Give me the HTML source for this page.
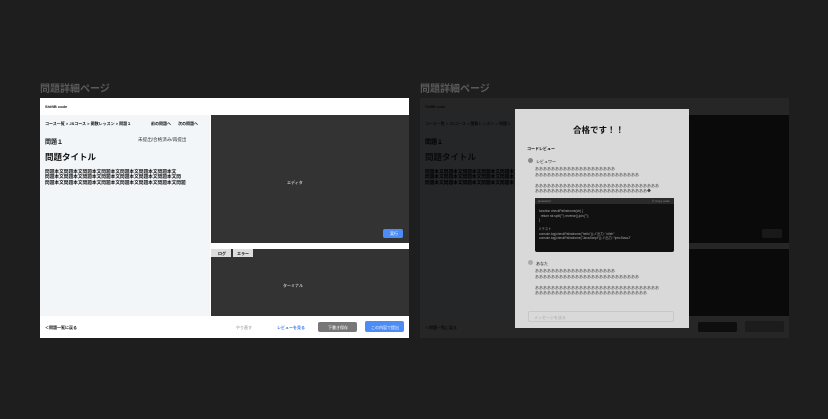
<!DOCTYPE html>
<html><head><meta charset="utf-8"><style>
*{margin:0;padding:0;box-sizing:border-box}
body{width:828px;height:419px;background:#1e1e1e;position:relative;overflow:hidden;font-family:"Liberation Sans","Noto Sans CJK JP",sans-serif;color:#111}
.a{position:absolute;white-space:nowrap}
.t{font-size:4px}
.b{font-weight:bold}
</style></head><body>
<div class="a" style="left:40px;top:80px;font-size:10px;color:#5a5a5a;font-weight:bold">問題詳細ページ</div>
<div class="a" style="left:420px;top:80px;font-size:10px;color:#5a5a5a;font-weight:bold">問題詳細ページ</div>

<!-- left frame -->
<div class="a" style="left:40px;top:98px;width:369px;height:240px;background:#fff"></div>
<div class="a t b" style="left:45px;top:104px">ShiftB code</div>
<div class="a" style="left:40px;top:115px;width:170px;height:201px;background:#f3f6f9"></div>
<div class="a t b" style="left:45px;top:121px">コース一覧 &gt; JSコース &gt; 関数レッスン &gt; 問題１</div>
<div class="a t b" style="left:151px;top:121px">前の問題へ</div>
<div class="a t b" style="left:178px;top:121px">次の問題へ</div>
<div class="a b" style="left:45px;top:137px;font-size:6px">問題１</div>
<div class="a" style="left:138px;top:137px;font-size:4.6px;color:#333">未提出/合格済み/再提出</div>
<div class="a b" style="left:45px;top:151px;font-size:8.5px">問題タイトル</div>
<div class="a b" style="left:45px;top:169px;font-size:4.7px;line-height:5.3px">問題本文問題本文問題本文問題本文問題本文問題本文問題本文<br>問題本文問題本文問題本文問題本文問題本文問題本文問題本文問<br>問題本文問題本文問題本文問題本文問題本文問題本文問題本文問題</div>
<div class="a" style="left:211px;top:115px;width:198px;height:128px;background:#333"></div>
<div class="a t" style="left:287px;top:180px;color:#fff">エディタ</div>
<div class="a" style="left:383px;top:229px;width:20px;height:9px;background:#4d8cf5;border-radius:2px"></div>
<div class="a t" style="left:390px;top:231px;color:#fff">実行</div>
<div class="a" style="left:211px;top:249px;width:198px;height:67px;background:#333"></div>
<div class="a" style="left:211px;top:249px;width:20px;height:8px;background:#ddd"></div>
<div class="a" style="left:233px;top:249px;width:20px;height:8px;background:#ddd"></div>
<div class="a t b" style="left:218px;top:251px">ログ</div>
<div class="a t b" style="left:237px;top:251px">エラー</div>
<div class="a t" style="left:283px;top:283px;color:#fff">ターミナル</div>
<div class="a t b" style="left:45px;top:325px">＜問題一覧に戻る</div>
<div class="a t" style="left:236px;top:325px;color:#888">やり直す</div>
<div class="a t b" style="left:277px;top:325px;color:#3b7be8">レビューを見る</div>
<div class="a" style="left:318px;top:322px;width:39px;height:10px;background:#777;border-radius:2px"></div>
<div class="a t" style="left:328px;top:325px;color:#fff">下書き保存</div>
<div class="a" style="left:365px;top:321px;width:39px;height:11px;background:#4d8cf5;border-radius:2px"></div>
<div class="a t" style="left:371px;top:325px;color:#fff">この内容で提出</div>

<!-- right frame dimmed -->
<div class="a" style="left:420px;top:98px;width:369px;height:240px;background:#262626"></div>
<div class="a" style="left:420px;top:115px;width:170px;height:201px;background:#252627"></div>
<div class="a t" style="left:425px;top:104px;color:#000">ShiftB code</div>
<div class="a t" style="left:425px;top:121px;color:#000">コース一覧 &gt; JSコース &gt; 関数レッスン &gt; 問題１</div>
<div class="a b" style="left:425px;top:137px;font-size:6px;color:#000">問題１</div>
<div class="a b" style="left:425px;top:151px;font-size:8.5px;color:#0a0a0a">問題タイトル</div>
<div class="a b" style="left:425px;top:169px;font-size:4.7px;line-height:5.3px;color:#000">問題本文問題本文問題本文問題本文問題本文<br>問題本文問題本文問題本文問題本文問題本文<br>問題本文問題本文問題本文問題本文問題本文</div>
<div class="a" style="left:591px;top:115px;width:198px;height:128px;background:#0a0a0a"></div>
<div class="a" style="left:762px;top:229px;width:20px;height:9px;background:#191919;border-radius:2px"></div>
<div class="a" style="left:591px;top:249px;width:198px;height:67px;background:#0a0a0a"></div>
<div class="a t" style="left:425px;top:325px;color:#000">＜問題一覧に戻る</div>
<div class="a" style="left:698px;top:322px;width:39px;height:10px;background:#0e0e0e;border-radius:2px"></div>
<div class="a" style="left:745px;top:321px;width:39px;height:11px;background:#1c1c1c;border-radius:2px"></div>

<!-- modal -->
<div class="a" style="left:515px;top:109px;width:174px;height:219px;background:#d9d9d9"></div>
<div class="a b" style="left:573px;top:124px;font-size:8.5px">合格です！！</div>
<div class="a t b" style="left:527px;top:146px">コードレビュー</div>
<div class="a" style="left:528px;top:158px;width:5px;height:5px;border-radius:50%;background:#888"></div>
<div class="a t" style="left:536px;top:159px">レビュワー</div>
<div class="a t" style="left:535px;top:166px;line-height:5.5px;color:#444">ああああああああああああああああああああ<br>ああああああああああああああああああああああああああ<br><br>あああああああああああああああああああああああああああああああ<br>ああああああああああああああああああああああああああああ◆</div>
<div class="a" style="left:535px;top:198px;width:139px;height:54px;background:#111;border-radius:2px"></div>
<div class="a" style="left:535px;top:198px;width:139px;height:6px;background:#2a2a2a"></div>
<div class="a" style="left:538px;top:199px;font-size:3px;color:#888">javascript</div>
<div class="a" style="left:652px;top:199px;font-size:3px;color:#888">⎘ Copy code</div>
<div class="a" style="left:539px;top:209px;font-size:3.2px;line-height:4.5px;color:#aaa">function checkPalindrome(str) {<br>&nbsp;&nbsp;return str.split("").reverse().join("");<br>}<br><br>// テスト<br>console.log(checkPalindrome("hello")); // 出力: "olleh"<br>console.log(checkPalindrome("JavaScript")); // 出力: "tpircSavaJ"</div>
<div class="a" style="left:528px;top:260px;width:5px;height:5px;border-radius:50%;background:#aaa"></div>
<div class="a t" style="left:536px;top:261px">あなた</div>
<div class="a t" style="left:535px;top:268px;line-height:5.5px;color:#444">ああああああああああああああああああああ<br>ああああああああああああああああああああああああああ<br><br>あああああああああああああああああああああああああああああああ<br>ああああああああああああああああああああああああああああ</div>
<div class="a" style="left:528px;top:311px;width:146px;height:11px;border:1px solid #c8c8c8;border-radius:2px"></div>
<div class="a t" style="left:534px;top:315px;color:#aaa">メッセージを送る</div>
</body></html>
